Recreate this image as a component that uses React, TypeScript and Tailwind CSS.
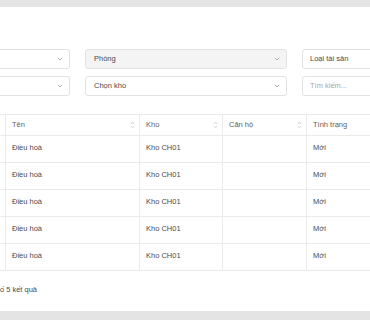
import React from 'react';

const font = { fontFamily: '"Liberation Sans", Arial, sans-serif' };

function Chevron() {
  return (
    <svg width="6" height="4" viewBox="0 0 6 4" className="shrink-0">
      <path d="M0.8 0.8 L3 3 L5.2 0.8" fill="none" stroke="#9a9a9a" strokeWidth="0.8" />
    </svg>
  );
}

function SortIcon() {
  return (
    <svg width="5" height="8" viewBox="0 0 5 8" className="shrink-0">
      <path d="M0.8 3 L2.5 1.2 L4.2 3" fill="none" stroke="#cacaca" strokeWidth="0.8" />
      <path d="M0.8 5 L2.5 6.8 L4.2 5" fill="none" stroke="#cacaca" strokeWidth="0.8" />
    </svg>
  );
}

function Select({ label, disabled }: { label: string; disabled?: boolean }) {
  return (
    <div
      className={`w-[202px] h-[20px] shrink-0 flex items-center justify-between pl-[8px] pr-[6px] rounded-[3px] border border-[#e2e2e2] ${
        disabled ? 'bg-[#f4f4f4]' : 'bg-white'
      }`}
    >
      <span className="text-[7.5px] text-[#4a4a4a]">{label}</span>
      <Chevron />
    </div>
  );
}

function Input({ label, placeholder }: { label: string; placeholder?: boolean }) {
  return (
    <div className="w-[202px] h-[20px] shrink-0 flex items-center px-[7px] rounded-[3px] border border-[#e2e2e2] bg-white">
      <span className={`text-[7.5px] ${placeholder ? 'text-[#a8a8a8]' : 'text-[#4a4a4a]'}`}>{label}</span>
    </div>
  );
}

const rows = Array.from({ length: 5 }, () => ({ ten: 'Điều hoà', kho: 'Kho CH01', canho: '', tinhtrang: 'Mới' }));

export default function App() {
  return (
    <div className="w-[370px] h-[320px] bg-[#e4e4e4] pt-[7px] overflow-hidden" style={font}>
      <div className="bg-white h-[304px] overflow-hidden pt-[42px]">
        {/* Bộ lọc */}
        <div className="flex flex-col gap-[7px]">
          <div className="flex gap-[15px] ml-[-132px]">
            <Select label="" />
            <Select label="Phòng" disabled />
            <Input label="Loại tài sản" />
          </div>
          <div className="flex gap-[15px] ml-[-132px]">
            <Select label="" />
            <Select label="Chọn kho" />
            <Input label="Tìm kiếm..." placeholder />
          </div>
        </div>

        {/* Bảng */}
        <div className="mt-[18px] ml-[-34px]">
          <div className="flex h-[22px] border-t border-b border-[#ebebeb] text-[7.5px] text-[#5f5f5f]">
            <div className="w-[40px] shrink-0 border-r border-[#ebebeb]" />
            <div className="w-[134px] shrink-0 flex items-center justify-between pl-[6px] pr-[4px] border-r border-[#ebebeb]">
              <span>Tên</span>
              <SortIcon />
            </div>
            <div className="w-[83px] shrink-0 flex items-center justify-between pl-[6px] pr-[4px] border-r border-[#ebebeb]">
              <span>Kho</span>
              <SortIcon />
            </div>
            <div className="w-[84px] shrink-0 flex items-center justify-between pl-[6px] pr-[4px] border-r border-[#ebebeb]">
              <span>Căn hộ</span>
              <SortIcon />
            </div>
            <div className="w-[100px] shrink-0 flex items-center px-[6px]">
              <span>Tình trạng</span>
            </div>
          </div>
          {rows.map((r, i) => (
            <div key={i} className="flex h-[27px] border-b border-[#ebebeb] text-[7.5px] text-[#4a4a4a] leading-[11px]">
              <div className="w-[40px] shrink-0 border-r border-[#ebebeb]" />
              <div className="w-[134px] shrink-0 pt-[6px] px-[6px] border-r border-[#ebebeb]">{r.ten}</div>
              <div className="w-[83px] shrink-0 pt-[6px] px-[6px] border-r border-[#ebebeb]">{r.kho}</div>
              <div className="w-[84px] shrink-0 pt-[6px] px-[6px] border-r border-[#ebebeb]">{r.canho}</div>
              <div className="w-[100px] shrink-0 pt-[6px] px-[6px]">{r.tinhtrang}</div>
            </div>
          ))}
        </div>

        {/* Chân bảng */}
        <div className="mt-[13px] ml-[-200px] w-[237px] flex justify-end text-[7.5px] text-[#4a4a4a]">
          <span className="whitespace-nowrap">Hiển thị 1 đến 5 trong tổng số 5 kết quả</span>
        </div>
      </div>
    </div>
  );
}
